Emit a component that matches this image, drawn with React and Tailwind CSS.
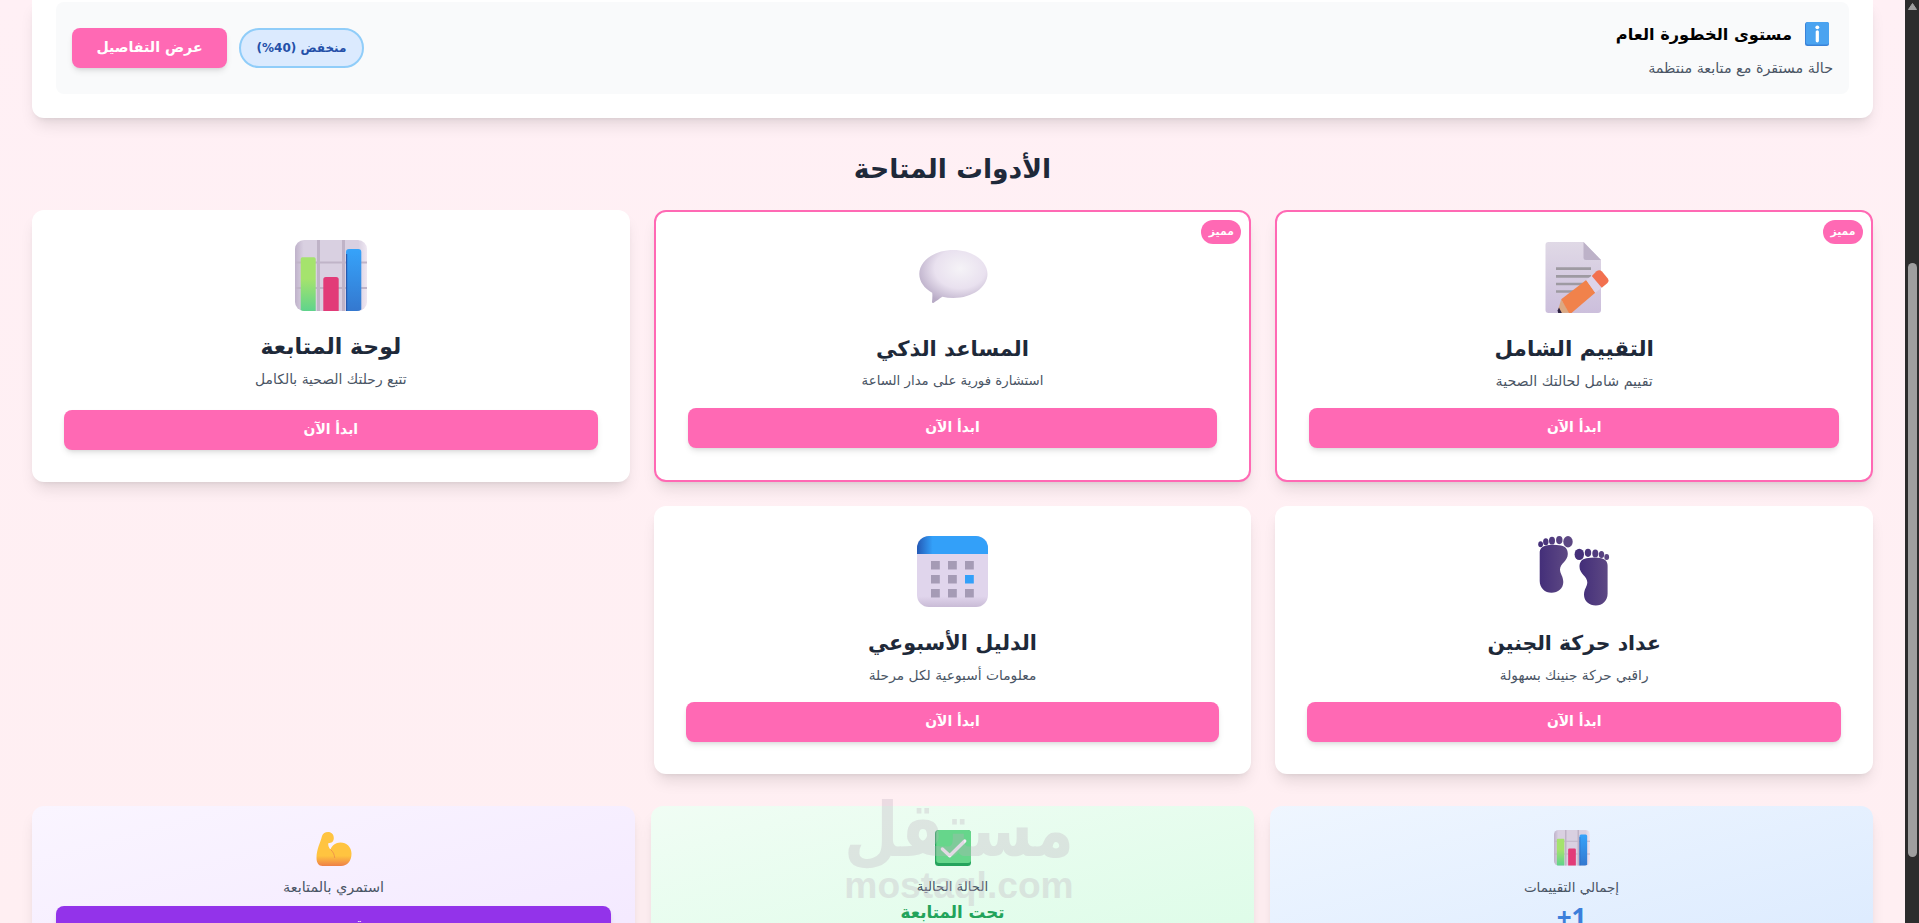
import React from "react";

const ChartIcon = ({ className }) => (
  <svg viewBox="0 0 72 72" className={className}>
    <defs>
      <linearGradient id="chartBg" x1="0" y1="0" x2="1" y2="0">
        <stop offset="0" stopColor="#bfb2ca" />
        <stop offset="0.12" stopColor="#d9d0e1" />
        <stop offset="0.88" stopColor="#d9d0e1" />
        <stop offset="1" stopColor="#efe8f3" />
      </linearGradient>
      <linearGradient id="chartGreen" x1="0" y1="0" x2="0" y2="1">
        <stop offset="0.4" stopColor="#a5e36d" />
        <stop offset="1" stopColor="#5fd38c" />
      </linearGradient>
      <linearGradient id="chartBlue" x1="0" y1="0" x2="0" y2="1">
        <stop offset="0" stopColor="#36a3fa" />
        <stop offset="1" stopColor="#3478cf" />
      </linearGradient>
    </defs>
    <rect x="0" y="0" width="72" height="71" rx="9" fill="url(#chartBg)" />
    <path d="M0 22.5H72M0 48H72" stroke="#c0b4c8" strokeWidth="2.2" />
    <path d="M23.5 0V71M48.5 0V71" stroke="#bfb3c7" strokeWidth="3" />
    <path d="M5.7 19a1.7 1.7 0 0 1 1.7-1.7H19a1.7 1.7 0 0 1 1.7 1.7V71H9Q7 71 5.7 70z" fill="url(#chartGreen)" />
    <path d="M28.3 39.5a2.5 2.5 0 0 1 2.5-2.5h10.4a2.5 2.5 0 0 1 2.5 2.500V71H28.3z" fill="#e23b78" />
    <path d="M51 12a3 3 0 0 1 3-3h9.3a3 3 0 0 1 3 3V69.500Q64.500 71 62 71H51z" fill="url(#chartBlue)" />
    <path d="M51.6 14V71" stroke="#2559b0" strokeWidth="1.2" />
  </svg>
);

const NoteIcon = ({ className }) => (
  <svg viewBox="0 0 72 72" className={className}>
    <defs>
      <linearGradient id="noteBg" x1="0" y1="0" x2="0" y2="1">
        <stop offset="0" stopColor="#e0d9e6" />
        <stop offset="1" stopColor="#ccbfdc" />
      </linearGradient>
    </defs>
    <path d="M10.5 0H45.5L63 18V68a3 3 0 0 1-3 3H10.5a3 3 0 0 1-3-3V3a3 3 0 0 1 3-3z" fill="url(#noteBg)" />
    <path d="M45.5 0L63 18H48a2.5 2.5 0 0 1-2.5-2.5z" fill="#bdb2c8" />
    <path d="M18 26.7H53M18 34.3H53M18 42H45M18 49.5H36" stroke="#9e9aa2" strokeWidth="2.7" />
    <path d="M23.2 57.3L31.5 70.7L20.8 71L19.8 69z" fill="#dba983" />
    <path d="M21 65.5L23.8 71H20.2L19.6 68.5z" fill="#2b2140" />
    <path d="M48.2 38L57.2 50.7L33.5 71H31L23.2 57.3z" fill="#f1824b" />
    <path d="M53.8 33.5L63.8 45.8L57.2 50.7L48.2 38z" fill="#ddd3ea" />
    <path d="M53.8 34L58.5 29.2Q61.500 27 64 29.500L70 36.800Q71.500 39 69.500 41L63.800 45.800z" fill="#f2704f" />
  </svg>
);

const BubbleIcon = ({ className }) => (
  <svg viewBox="0 0 72 72" className={className}>
    <defs>
      <radialGradient id="bubbleBg" cx="0.6" cy="0.35" r="0.68">
        <stop offset="0" stopColor="#f5f3f7" />
        <stop offset="0.55" stopColor="#e9e1ef" />
        <stop offset="1" stopColor="#b8abc6" />
      </radialGradient>
    </defs>
    <path
      d="M36.4 8C55.5 8 70.5 19 70.5 32S55.5 56 36.4 56C32.5 56 28.8 55.6 25.4 54.8C22 57 19.5 59 16.8 60.8C15.8 61.5 14.8 61 15 59.8C15.3 56.6 15.6 53.5 15.2 50.7C7.3 46.4 2.3 39.7 2.3 32C2.3 19 17.3 8 36.4 8z"
      fill="url(#bubbleBg)"
    />
  </svg>
);

const Foot = () => (
  <>
    <path d="M8 9.500Q14 8 23 9.500C27.500 10.200 29.800 13.500 29.800 18C29.800 25 22 27.500 22 33.500C22 38 25.300 40 25.300 46C25.300 52.500 20 56.800 13.500 56.800S1.700 52 1.700 45V17C1.700 13 4 10.300 8 9.500z" />
    <ellipse cx="30" cy="5.700" rx="4.700" ry="5.700" />
    <ellipse cx="21.300" cy="4.100" rx="3.200" ry="4.100" />
    <ellipse cx="14" cy="4.700" rx="3" ry="3.900" />
    <ellipse cx="7.800" cy="5.700" rx="2.700" ry="3.500" />
    <ellipse cx="2.600" cy="8.200" rx="2.400" ry="3" />
  </>
);

const FeetIcon = ({ className }) => (
  <svg viewBox="0 0 72 72" className={className}>
    <defs>
      <linearGradient id="footBg" gradientUnits="userSpaceOnUse" x1="0" y1="0" x2="30" y2="0">
        <stop offset="0.1" stopColor="#45307a" />
        <stop offset="0.9" stopColor="#5c4783" />
      </linearGradient>
      <linearGradient id="footBgRight" gradientUnits="userSpaceOnUse" x1="30" y1="0" x2="0" y2="0">
        <stop offset="0.1" stopColor="#45307a" />
        <stop offset="0.9" stopColor="#5c4783" />
      </linearGradient>
    </defs>
    <g fill="url(#footBg)">
      <Foot />
    </g>
    <g fill="url(#footBgRight)" transform="translate(71.3 12.7) scale(-1 1)">
      <Foot />
    </g>
  </svg>
);

const CalendarIcon = ({ className }) => (
  <svg viewBox="0 0 72 72" className={className}>
    <defs>
      <linearGradient id="calTop" x1="0" y1="0" x2="1" y2="0">
        <stop offset="0" stopColor="#2459b5" />
        <stop offset="0.22" stopColor="#33a0f9" />
        <stop offset="1" stopColor="#33a0f9" />
      </linearGradient>
      <linearGradient id="calBody" x1="0" y1="0" x2="0" y2="1">
        <stop offset="0.85" stopColor="#e0d5ec" />
        <stop offset="1" stopColor="#c9bbd6" />
      </linearGradient>
    </defs>
    <rect x="0" y="0" width="71" height="71" rx="12" fill="url(#calBody)" />
    <path d="M0 18V12a12 12 0 0 1 12-12h47a12 12 0 0 1 12 12v6z" fill="url(#calTop)" />
    {[25, 39, 53].map((y) =>
      [14, 31, 48].map((x) => (
        <rect key={`${x}-${y}`} x={x} y={y} width="8.8" height="8.5" fill={x === 48 && y === 39 ? "#33a0f9" : "#a59bb5"} />
      ))
    )}
  </svg>
);

const CheckIcon = ({ className }) => (
  <svg viewBox="0 0 36 36" className={className}>
    <rect width="36" height="36" rx="3.5" fill="#25a35c" />
    <rect x="1.2" width="34.8" height="33" rx="3" fill="#66d68b" />
    <path d="M7.4 19L14.7 25.7L29.7 11" fill="none" stroke="#f3ecf6" strokeWidth="3.4" strokeLinecap="round" strokeLinejoin="round" />
  </svg>
);

const MuscleIcon = ({ className }) => (
  <svg viewBox="0 0 36 36" className={className}>
    <defs>
      <linearGradient id="muscleBg" x1="0" y1="0" x2="0" y2="1">
        <stop offset="0.7" stopColor="#ffc440" />
        <stop offset="1" stopColor="#ee7f48" />
      </linearGradient>
    </defs>
    <path
      d="M6 6C7 3.300 9 2 12 2C15.500 2 17.800 4.500 17.800 8S15.500 13.300 12.200 13.200C12 15.500 13 18 14.500 19.500C16 15.500 19.500 12.500 24.500 12.500C30.500 12.500 35.500 17 35.500 23.500C35.500 31 31.500 36 25 36H6.500C2.500 36 0.500 32.500 0.500 28C0.500 19 4.500 12.500 6 6z"
      fill="url(#muscleBg)"
    />
    <path d="M14.500 19.500C17 21.500 18.500 24.500 18.700 28" fill="none" stroke="#f0964a" strokeWidth="1" />
  </svg>
);

const InfoIcon = ({ className }) => (
  <svg viewBox="0 0 24 24" className={className}>
    <rect width="24" height="24" rx="2.5" fill="#3a82d8" />
    <rect x="1" width="23" height="22.5" rx="2" fill="#4aa3f0" />
    <circle cx="12.3" cy="5.3" r="1.9" fill="#fff" />
    <path d="M12.3 9.8V18.8" stroke="#fff" strokeWidth="3.2" strokeLinecap="round" />
  </svg>
);

const tools = [
  {
    title: "التقييم الشامل",
    titleSize: "text-[21.5px]",
    description: "تقييم شامل لحالتك الصحية",
    descriptionSize: "text-[14.2px]",
    icon: NoteIcon,
    featured: true,
  },
  {
    title: "المساعد الذكي",
    titleSize: "text-[21px]",
    description: "استشارة فورية على مدار الساعة",
    descriptionSize: "text-[13.3px]",
    icon: BubbleIcon,
    featured: true,
  },
  {
    title: "لوحة المتابعة",
    titleSize: "text-[22px]",
    description: "تتبع رحلتك الصحية بالكامل",
    descriptionSize: "text-[13.9px]",
    icon: ChartIcon,
  },
  {
    title: "عداد حركة الجنين",
    titleSize: "text-[20.4px]",
    description: "راقبي حركة جنينك بسهولة",
    descriptionSize: "text-[13.7px]",
    icon: FeetIcon,
  },
  {
    title: "الدليل الأسبوعي",
    titleSize: "text-[20.8px]",
    description: "معلومات أسبوعية لكل مرحلة",
    descriptionSize: "text-[13.8px]",
    icon: CalendarIcon,
  },
];

function ToolCard({ tool }) {
  const Icon = tool.icon;
  return (
    <div
      className={`relative flex flex-col items-center rounded-xl bg-white p-8 text-center shadow-lg ${
        tool.featured ? "border-2 border-[#ff69b4]" : ""
      }`}
    >
      {tool.featured && (
        <span className="absolute right-2 top-2 flex h-6 w-10 items-center justify-center rounded-full bg-[#ff69b4] text-[10.8px] font-bold text-white">
          مميز
        </span>
      )}
      <Icon className="-mt-0.5 mb-[19px] size-[72px] shrink-0" />
      <h3 className={`mb-1.5 font-bold leading-8 text-gray-800 ${tool.titleSize}`}>{tool.title}</h3>
      <p className={`mb-[17px] leading-5 text-gray-600 ${tool.descriptionSize}`}>{tool.description}</p>
      <button className="mt-auto h-10 w-full shrink-0 rounded-lg bg-[#ff69b4] pb-0.5 text-[13.9px] font-bold text-white shadow-md">
        ابدأ الآن
      </button>
    </div>
  );
}

function StatCard({ icon: Icon, label, labelSize, className, children }) {
  return (
    <div className={`flex h-[164px] flex-col items-center rounded-xl bg-gradient-to-br p-6 text-center shadow-lg ${className}`}>
      <Icon className="mb-[11px] size-9 shrink-0" />
      <p className={`mb-px shrink-0 leading-5 text-gray-600 ${labelSize}`}>{label}</p>
      {children}
    </div>
  );
}

function Watermark() {
  return (
    <div className="pointer-events-none absolute left-[844px] top-[802px] flex w-[230px] flex-col items-center font-bold text-[#beafbe] opacity-30">
      <span className="flex h-[72px] origin-bottom scale-y-[1.2] items-center text-[62.9px] leading-none">مستقل</span>
      <span dir="ltr" className="-mt-3 font-['Liberation_Sans',sans-serif] text-[37.2px] leading-[46px]">
        mostaql.com
      </span>
    </div>
  );
}

function Scrollbar() {
  return (
    <div className="flex w-3.5 shrink-0 flex-col items-center bg-[#2c2c2c] pt-[3px]">
      <svg viewBox="0 0 9 7" className="h-[7px] w-[9px]">
        <path d="M4.5 0.5L8.5 6.5H0.5z" fill="#9f9f9f" stroke="#9f9f9f" strokeLinejoin="round" />
      </svg>
      <div className="mt-[253px] h-[594px] w-[9px] rounded-full bg-[#9f9f9f]" />
    </div>
  );
}

export default function App() {
  return (
    <div
      dir="ltr"
      className="relative flex h-[923px] overflow-hidden bg-gradient-to-b from-[#fff0f5] to-[#ffeff2] font-['DejaVu_Sans',sans-serif]"
    >
      <main dir="rtl" className="flex-1 px-8">
        {/* Risk level summary */}
        <section className="rounded-b-xl bg-white px-6 pb-6 pt-0.5 shadow-lg">
          <div className="flex h-[92px] items-center justify-between rounded-lg bg-gray-50 p-4">
            <div>
              <div className="mb-2 flex items-center gap-2">
                <span className="flex w-[33px] justify-center">
                  <InfoIcon className="size-6" />
                </span>
                <h2 className="pt-0.5 text-[16.2px] font-bold leading-[30px] text-black">مستوى الخطورة العام</h2>
              </div>
              <p className="text-[14.3px] leading-5 text-gray-600">حالة مستقرة مع متابعة منتظمة</p>
            </div>
            <div className="flex gap-3">
              <span className="flex h-10 w-[125px] items-center justify-center rounded-full border-2 border-[#90cdf9] bg-blue-100 text-[12px] font-bold text-[#2450a8]">
                منخفض (40%)
              </span>
              <button className="h-10 w-[155px] rounded-lg bg-[#ff69b4] text-[14.2px] font-bold text-white shadow-md">
                عرض التفاصيل
              </button>
            </div>
          </div>
        </section>

        {/* Tools */}
        <h2 className="mb-[23px] mt-[33px] text-center text-[26.6px] font-bold leading-9 text-gray-800">الأدوات المتاحة</h2>
        <section className="grid grid-cols-3 gap-6">
          {tools.map((tool) => (
            <ToolCard key={tool.title} tool={tool} />
          ))}
        </section>

        {/* Stats */}
        <section className="mt-8 grid grid-cols-3 gap-4">
          <StatCard icon={ChartIcon} label="إجمالي التقييمات" labelSize="text-[13.5px]" className="from-blue-50 to-blue-100">
            <p dir="ltr" className="font-['Open_Sans',sans-serif] text-[26px] font-bold leading-[38px] text-[#3b7fdb]">
              +1
            </p>
          </StatCard>
          <StatCard icon={CheckIcon} label="الحالة الحالية" labelSize="text-[13.3px]" className="from-green-50 to-green-100">
            <p className="text-[16.7px] font-bold leading-7 text-[#22a35a]">تحت المتابعة</p>
          </StatCard>
          <StatCard icon={MuscleIcon} label="استمري بالمتابعة" labelSize="text-[14.4px]" className="from-purple-50 to-purple-100">
            <button className="mt-2 h-10 w-full shrink-0 rounded-lg bg-[#9333ea] pb-0.5 text-[13.6px] font-bold text-white shadow-md">
              تقييم جديد
            </button>
          </StatCard>
        </section>
      </main>
      <Scrollbar />
      <Watermark />
    </div>
  );
}
